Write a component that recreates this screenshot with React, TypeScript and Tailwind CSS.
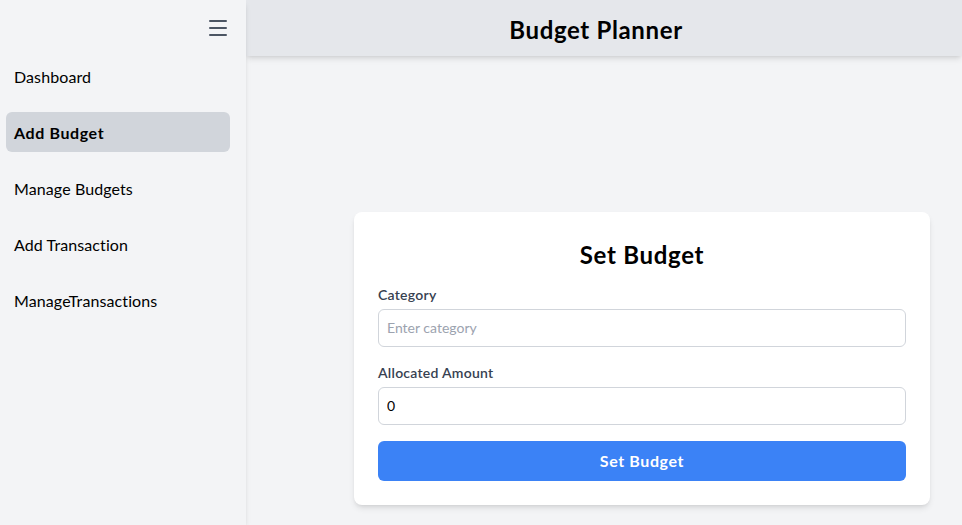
import React from "react";
import { Menu } from "lucide-react";

const items = ["Dashboard", "Add Budget", "Manage Budgets", "Add Transaction", "ManageTransactions"];

export default function App() {
  return (
    <div className="flex h-[525px] w-[962px] overflow-hidden bg-[#f3f4f6] text-black" style={{ fontFamily: 'Lato, "Noto Sans", sans-serif' }}>
      <aside className="relative z-10 flex w-[246px] shrink-0 flex-col bg-[#f3f4f6] shadow-md">
        <div className="flex h-14 items-center justify-end px-4">
          <Menu className="h-6 w-6 text-[#4b5563]" strokeWidth={2} />
        </div>
        <nav className="flex flex-col gap-4">
          {items.map((it) => (
            <div
              key={it}
              className={`mx-[6px] flex h-10 w-[224px] items-center rounded-md px-2 pt-[1px] text-base ${
                it === "Add Budget" ? "bg-[#d1d5db] font-bold tracking-[0.6px]" : "tracking-[0.1px]"
              }`}
            >
              {it}
            </div>
          ))}
        </nav>
      </aside>
      <div className="flex min-w-0 flex-1 flex-col">
        <header className="flex h-14 items-center justify-center bg-[#e5e7eb] pt-1 shadow-md">
          <h1 className="-ml-4 text-2xl font-bold tracking-[0.65px]">Budget Planner</h1>
        </header>
        <main className="flex flex-1 justify-end pr-8 pt-[156px]">
          <div className="h-fit w-[576px] rounded-lg bg-white px-6 pb-6 pt-[25px] shadow-md">
            <h2 className="mb-4 pt-1 text-center text-2xl font-bold leading-7 tracking-[0.7px]">Set Budget</h2>
            <label className="mb-1 block text-sm font-semibold tracking-[0.25px] text-[#374151]">Category</label>
            <input
              className="mb-4 block w-full rounded-md border border-[#d1d5db] px-2 py-2 text-sm placeholder-[#9ca3af] outline-none"
              placeholder="Enter category"
            />
            <label className="mb-1 block text-sm font-semibold tracking-[0.25px] text-[#374151]">Allocated Amount</label>
            <input
              className="block w-full rounded-md border border-[#d1d5db] px-2 py-2 text-sm outline-none"
              defaultValue="0"
            />
            <button className="mt-4 block h-10 w-full rounded-md bg-[#3b82f6] text-base font-bold tracking-[0.6px] text-white">
              Set Budget
            </button>
          </div>
        </main>
      </div>
    </div>
  );
}
